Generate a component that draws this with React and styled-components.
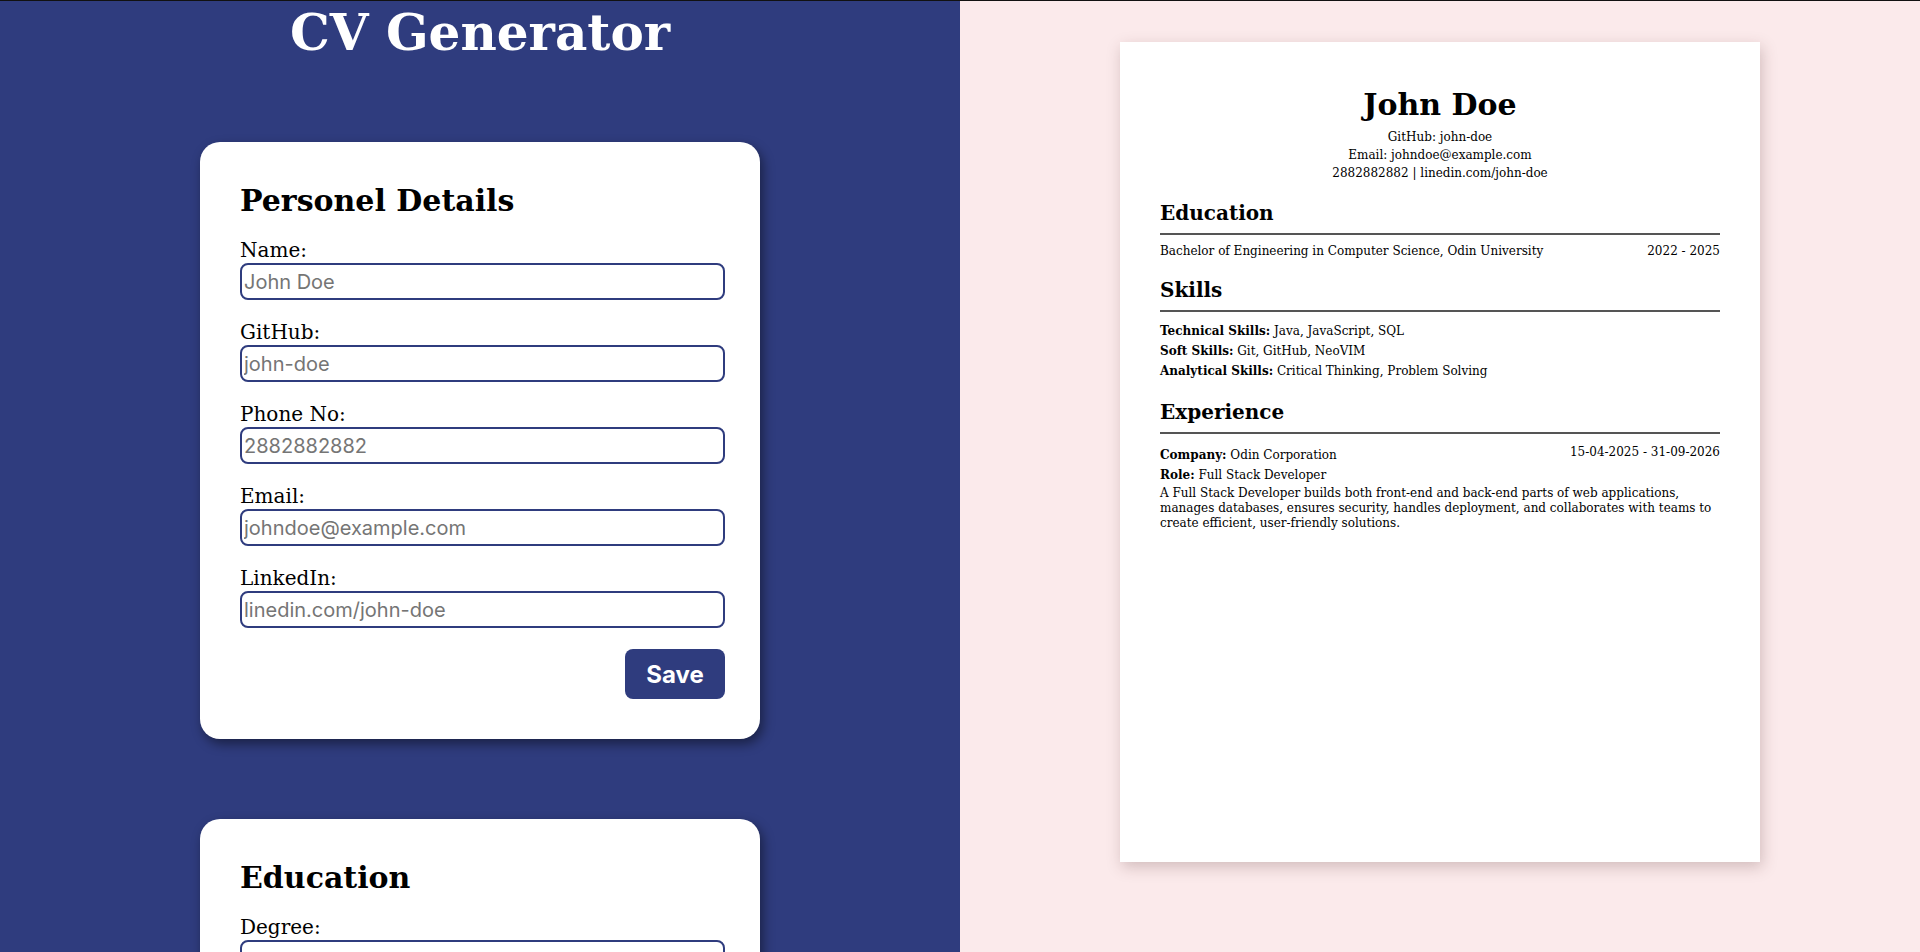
import React from 'react';
import styled, { createGlobalStyle } from 'styled-components';

const GlobalStyle = createGlobalStyle`
  html, body {
    margin: 0;
    padding: 0;
    overflow: hidden;
    font-family: "DejaVu Serif", serif;
  }
  * {
    box-sizing: border-box;
  }
`;

const Layout = styled.div`
  display: grid;
  grid-template-columns: 1fr 1fr;
  height: 100vh;
  border-top: 1px solid #111;
`;

const Editor = styled.section`
  background-color: #2f3c7e;
  overflow-y: auto;
  scrollbar-width: none;
  display: flex;
  flex-direction: column;
  align-items: center;
  gap: 80px;
  padding: 2px 0 80px;

  &::-webkit-scrollbar {
    display: none;
  }
`;

const Title = styled.h1`
  margin: 0;
  color: white;
  font-size: 50px;
  line-height: 59px;
  font-weight: bold;
`;

const Card = styled.form`
  width: 560px;
  flex-shrink: 0;
  background-color: white;
  border-radius: 20px;
  padding: 41px 35px 40px 40px;
  box-shadow: 3px 5px 12px rgba(0, 0, 0, 0.45);
`;

const CardTitle = styled.h2`
  margin: 0 0 21px;
  font-size: 30px;
  line-height: 35px;
  font-weight: bold;
`;

const Fields = styled.div`
  display: flex;
  flex-direction: column;
  gap: 21px;
`;

const Field = styled.div`
  display: flex;
  flex-direction: column;
  gap: 1px;
`;

const Label = styled.label`
  font-size: 20px;
  line-height: 23px;
  color: #000;
`;

const Input = styled.input`
  width: 100%;
  height: 37px;
  border: 2px solid #2f3c7e;
  border-radius: 8px;
  padding: 0 2px;
  font-family: Inter, "Liberation Sans", sans-serif;
  font-size: 20px;
  color: #000;
  outline: none;

  &::placeholder {
    color: #757575;
  }
`;

const Actions = styled.div`
  display: flex;
  justify-content: flex-end;
  margin-top: 21px;
`;

const SaveButton = styled.button`
  width: 100px;
  height: 50px;
  border: none;
  border-radius: 8px;
  background-color: #2f3c7e;
  color: white;
  font-family: Inter, "Liberation Sans", sans-serif;
  font-size: 24px;
  font-weight: bold;
  cursor: pointer;
`;

const Preview = styled.section`
  background-color: #fbeaeb;
  display: flex;
  justify-content: center;
  align-items: flex-start;
  padding-top: 41px;
  overflow: hidden;
`;

const Paper = styled.article`
  width: 640px;
  height: 820px;
  flex-shrink: 0;
  background-color: white;
  padding: 40px;
  box-shadow: 2px 5px 14px rgba(90, 50, 50, 0.25);
  color: #000;
`;

const Header = styled.header`
  text-align: center;
`;

const Name = styled.h1`
  margin: 5px 0 0;
  font-size: 30px;
  line-height: 35px;
  font-weight: bold;
`;

const Contacts = styled.div`
  margin-top: 6px;
  font-size: 12px;
  line-height: 18px;
`;

const Section = styled.div`
  margin-top: 20px;
`;

const SectionTitle = styled.h2`
  margin: 0;
  font-size: 20px;
  line-height: 22px;
  font-weight: bold;
  padding-bottom: 9px;
  border-bottom: 2px solid #555;
`;

const Row = styled.div`
  display: flex;
  justify-content: space-between;
  align-items: flex-start;
  margin-top: ${props => props.gap ?? 8}px;
  font-size: 12px;
  line-height: ${props => props.lh ?? 15}px;
`;

const Lines = styled.div`
  margin-top: ${props => props.gap ?? 8}px;
  font-size: 12px;
  line-height: ${props => props.lh ?? 20}px;
`;

const Description = styled.p`
  margin: 1px 0 0;
  font-size: 12px;
  line-height: 15px;
`;

const personalFields = [
  { label: 'Name:', placeholder: 'John Doe' },
  { label: 'GitHub:', placeholder: 'john-doe' },
  { label: 'Phone No:', placeholder: '2882882882' },
  { label: 'Email:', placeholder: 'johndoe@example.com' },
  { label: 'LinkedIn:', placeholder: 'linedin.com/john-doe' },
];

const educationFields = [
  { label: 'Degree:', placeholder: '' },
  { label: 'University:', placeholder: '' },
  { label: 'Start Year:', placeholder: '' },
  { label: 'End Year:', placeholder: '' },
];

const FormCard = ({ title, fields }) => (
  <Card onSubmit={e => e.preventDefault()}>
    <CardTitle>{title}</CardTitle>
    <Fields>
      {fields.map(f => (
        <Field key={f.label}>
          <Label>{f.label}</Label>
          <Input type="text" placeholder={f.placeholder} />
        </Field>
      ))}
    </Fields>
    <Actions>
      <SaveButton type="submit">Save</SaveButton>
    </Actions>
  </Card>
);

const App = () => {
  return (
    <>
      <GlobalStyle />
      <Layout>
        <Editor>
          <Title>CV Generator</Title>
          <FormCard title="Personel Details" fields={personalFields} />
          <FormCard title="Education" fields={educationFields} />
        </Editor>

        <Preview>
          <Paper>
            <Header>
              <Name>John Doe</Name>
              <Contacts>
                <div>GitHub: john-doe</div>
                <div>Email: johndoe@example.com</div>
                <div>2882882882 | linedin.com/john-doe</div>
              </Contacts>
            </Header>

            <Section>
              <SectionTitle>Education</SectionTitle>
              <Row gap={9}>
                <span>Bachelor of Engineering in Computer Science, Odin University</span>
                <span>2022 - 2025</span>
              </Row>
            </Section>

            <Section>
              <SectionTitle>Skills</SectionTitle>
              <Lines gap={9}>
                <div><b>Technical Skills:</b> Java, JavaScript, SQL</div>
                <div><b>Soft Skills:</b> Git, GitHub, NeoVIM</div>
                <div><b>Analytical Skills:</b> Critical Thinking, Problem Solving</div>
              </Lines>
            </Section>

            <Section>
              <SectionTitle>Experience</SectionTitle>
              <Row gap={10.5}>
                <Lines gap={0}>
                  <div><b>Company:</b> Odin Corporation</div>
                  <div><b>Role:</b> Full Stack Developer</div>
                </Lines>
                <span>15-04-2025 - 31-09-2026</span>
              </Row>
              <Description>
                A Full Stack Developer builds both front-end and back-end parts of web applications,
                manages databases, ensures security, handles deployment, and collaborates with teams to
                create efficient, user-friendly solutions.
              </Description>
            </Section>
          </Paper>
        </Preview>
      </Layout>
    </>
  );
};

export default App;
